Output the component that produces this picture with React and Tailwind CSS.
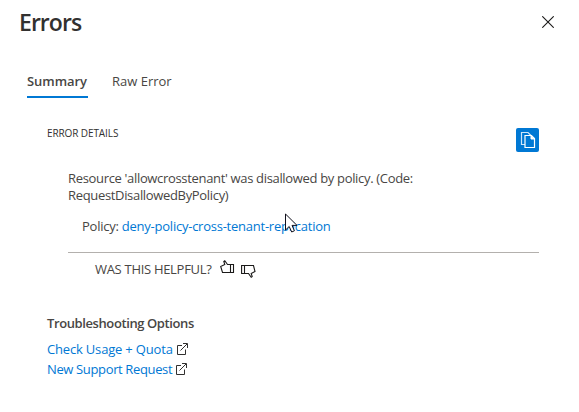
import React from "react";

function ExternalIcon() {
  return (
    <svg className="mb-0.5 h-3 w-3 shrink-0" viewBox="0 0 12 12" fill="none" stroke="#323130" strokeWidth="1">
      <path d="M6 2.5H1.5V11.5H9.5V6.5" />
      <path d="M4.5 7.5L11 1M7 .5H11.5V5" />
    </svg>
  );
}

function CopyIcon() {
  return (
    <svg className="h-[18px] w-4" viewBox="0 0 16 18" fill="none">
      <path d="M5 13.5H1.5V1.5H8L11 4.5" stroke="#cfe6f9" strokeWidth="1.2" />
      <path d="M5 4.5H11.5L14.5 7.5V16.5H5Z" fill="#0078d4" stroke="#fff" strokeWidth="1.2" />
      <path d="M11 4.5V8H14.5" fill="#fff" stroke="#fff" />
    </svg>
  );
}

function ThumbIcon({ down }) {
  return (
    <svg className={down ? "mt-[4px] h-[14px] w-[15px] -scale-y-100" : "h-[14px] w-[15px]"} viewBox="0 0 15 14" fill="none" stroke="#1b1a19" strokeWidth="1.1">
      {down ? (
        <path d="M3.5 4.5H7.5L10.2 .8L11.2 1.5L10.2 4.5L14 6.5L12.5 12.5H3.5M3.5 4.5H.6V12.5H3.5Z" />
      ) : (
        <path d="M10.5 4.5H7.5L4.8 .8L3.8 1.5L4.8 4.5L.7 6.5L2.5 12.5H10.5M10.5 4.5H13.5V12.5H10.5Z" />
      )}
    </svg>
  );
}

function Cursor() {
  return (
    <svg className="absolute left-[285px] top-[213px] h-5 w-[13px]" viewBox="0 0 13 20">
      <path d="M.5 1V17L4.2 13.5L6.7 19L9.4 17.8L7 12.4H12Z" fill="#fff" stroke="#10101c" />
    </svg>
  );
}

export default function App() {
  return (
    <div className="relative h-[412px] w-[579px] overflow-hidden bg-white font-['Open_Sans','Noto_Sans',sans-serif] text-[13px] text-[#484644]">
      <header className="flex h-11 items-start justify-between pl-[19px] pr-[25px]">
        <h1 className="mt-[6px] text-[23px] leading-8 font-semibold tracking-[-0.95px] text-[#323130]">Errors</h1>
        <svg className="mt-4 h-3 w-3" viewBox="0 0 12 12" stroke="#1b1a19" strokeWidth="1.1">
          <path d="M.3 .3L11.7 11.7M11.7 .3L.3 11.7" />
        </svg>
      </header>

      <nav className="flex h-[54px] items-end gap-6 pl-[27px]">
        <span className="h-[27px] w-[61px] border-b-2 border-[#0078d4] leading-[20px] font-semibold tracking-[-0.05px] whitespace-nowrap">Summary</span>
        <span className="h-[27px] leading-[20px]">Raw Error</span>
      </nav>

      <main className="pl-[47px] pr-10">
        <div className="flex h-[72px] items-start justify-between pt-[30px]">
          <h2 className="mt-[-3px] text-[10px] leading-[16px] tracking-[-0.1px] text-[#323130]">ERROR DETAILS</h2>
          <div className="flex h-6 w-[23px] items-center justify-center rounded-[2px] bg-[#0078d4]">
            <CopyIcon />
          </div>
        </div>

        <div className="ml-[21px] h-[83px] border-b border-[#b3b0ad]">
          <p className="h-[34px] leading-[17px] tracking-[-0.33px] whitespace-nowrap">
            Resource 'allowcrosstenant' was disallowed by policy. (Code:
            <br />
            RequestDisallowedByPolicy)
          </p>
          <p className="mt-[14px] pl-[14px] leading-[17px] tracking-[-0.24px] whitespace-nowrap">
            Policy: <span className="text-[#0078d4]">deny-policy-cross-tenant-replication</span>
          </p>
        </div>

        <div className="ml-12 flex h-[34px] items-start pt-[7px]">
          <span className="mt-[-1px] w-[125px] leading-5 tracking-[-0.3px] whitespace-nowrap">WAS THIS HELPFUL?</span>
          <ThumbIcon />
          <span className="w-[6px]" />
          <ThumbIcon down />
        </div>

        <section className="pt-[26px]">
          <h3 className="h-[27px] leading-5 font-semibold tracking-[-0.4px] whitespace-nowrap">Troubleshooting Options</h3>
          <a className="flex h-5 items-center text-[#0078d4]">
            <span className="w-[129px] tracking-[-0.18px] whitespace-nowrap">Check Usage + Quota</span>
            <ExternalIcon />
          </a>
          <a className="flex h-5 items-center text-[#0078d4]">
            <span className="w-[128px] tracking-[-0.36px] whitespace-nowrap">New Support Request</span>
            <ExternalIcon />
          </a>
        </section>
      </main>
      <Cursor />
    </div>
  );
}
